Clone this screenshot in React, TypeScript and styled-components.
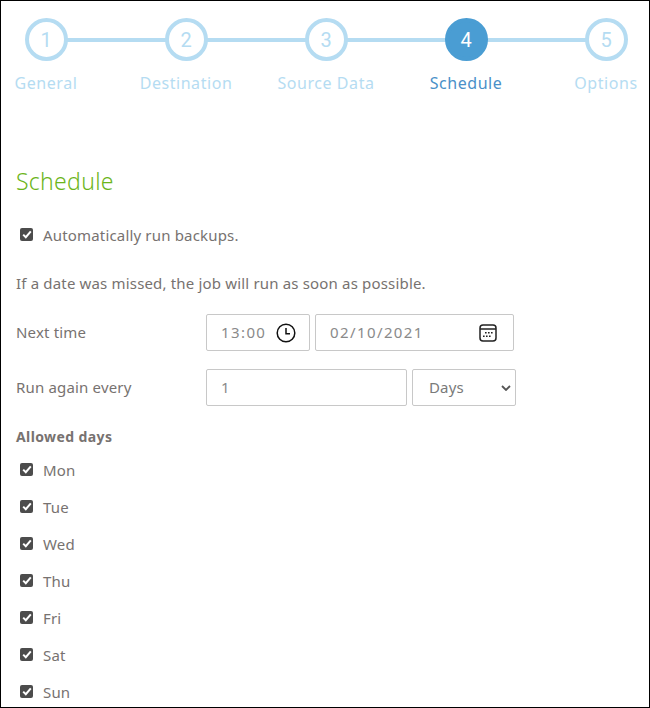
import { createGlobalStyle, styled } from "styled-components";

const steps = ["General", "Destination", "Source Data", "Schedule", "Options"];
const days = ["Mon", "Tue", "Wed", "Thu", "Fri", "Sat", "Sun"];

const GlobalStyle = createGlobalStyle`
  html, body {
    margin: 0;
    padding: 0;
    background: #fff;
  }
  * {
    box-sizing: border-box;
  }
`;

function Check() {
  return (
    <CheckBox>
      <svg width="10" height="9" viewBox="0 0 10 9" fill="none">
        <path d="M1.2 4.6 L3.8 7.2 L8.8 1.4" stroke="#fff" strokeWidth="2" />
      </svg>
    </CheckBox>
  );
}

function ClockIcon() {
  return (
    <svg width="20" height="20" viewBox="0 0 20 20" fill="none" stroke="#111" strokeWidth="1.5">
      <circle cx="10" cy="10" r="8.8" />
      <path d="M10 5 V10.8 H14" />
    </svg>
  );
}

function CalendarIcon() {
  return (
    <svg width="18" height="18" viewBox="0 0 18 18" fill="none">
      <rect x="1" y="1" width="16" height="16" rx="3" stroke="#222" strokeWidth="1.5" />
      <path d="M1 5 H17" stroke="#222" strokeWidth="1.5" />
      <path
        d="M6 8h1.6v1.5H6zM9 8h1.6v1.5H9zM12 8h1.6v1.5H12zM4 11.5h1.6V13H4zM7 11.5h1.6V13H7zM10 11.5h1.6V13H10z"
        fill="#222"
      />
    </svg>
  );
}

export default function App() {
  return (
    <>
      <GlobalStyle />
      <Page>
        <Stepper>
          {steps.map((label, i) => (
            <Step key={label}>
              <Circle $active={i === 3}>{i + 1}</Circle>
              <StepLabel $active={i === 3}>{label}</StepLabel>
            </Step>
          ))}
        </Stepper>

        <Heading>Schedule</Heading>

        <CheckRow>
          <Check />
          Automatically run backups.
        </CheckRow>

        <Note>If a date was missed, the job will run as soon as possible.</Note>

        <FormRow>
          <FieldLabel>Next time</FieldLabel>
          <Field $width={104} $right={13}>
            <span>13:00</span>
            <ClockIcon />
          </Field>
          <Field $width={199} $right={16}>
            <span>02/10/2021</span>
            <CalendarIcon />
          </Field>
        </FormRow>

        <FormRow>
          <FieldLabel>Run again every</FieldLabel>
          <Field $width={201} $right={16}>
            <span>1</span>
          </Field>
          <SelectField>
            <span>Days</span>
            <svg width="10" height="6" viewBox="0 0 10 6" fill="none">
              <path d="M1 1 L5 5 L9 1" stroke="#555" strokeWidth="1.8" />
            </svg>
          </SelectField>
        </FormRow>

        <SubHeading>Allowed days</SubHeading>
        <DayList>
          {days.map((day) => (
            <CheckRow key={day}>
              <Check />
              {day}
            </CheckRow>
          ))}
        </DayList>
      </Page>
    </>
  );
}

const Page = styled.div`
  width: 650px;
  height: 708px;
  overflow: hidden;
  border: 1px solid #000;
  padding: 17px 15px 0;
  font-family: "Noto Sans", sans-serif;
  font-size: 15px;
  letter-spacing: 0.17px;
  color: #777270;
`;

const Stepper = styled.div`
  margin-left: -40px;
  width: 700px;
  display: grid;
  grid-template-columns: repeat(5, 140px);
  position: relative;

  &::before {
    content: "";
    position: absolute;
    left: 70px;
    width: 560px;
    top: 20px;
    height: 4px;
    background: #b5dcf2;
  }
`;

const Step = styled.div`
  display: flex;
  flex-direction: column;
  align-items: center;
  position: relative;
`;

const Circle = styled.div<{ $active: boolean }>`
  width: 43px;
  height: 43px;
  border-radius: 50%;
  border: 4px solid ${(p) => (p.$active ? "#4a9dd3" : "#b5dcf2")};
  background: ${(p) => (p.$active ? "#4a9dd3" : "#fff")};
  color: ${(p) => (p.$active ? "#fff" : "#b5dcf2")};
  display: flex;
  align-items: center;
  justify-content: center;
  font-family: "Roboto", sans-serif;
  font-size: 20px;
  letter-spacing: 0;
  font-weight: 400;
`;

const StepLabel = styled.div<{ $active: boolean }>`
  margin-top: 10px;
  font-size: 16px;
  line-height: 24px;
  letter-spacing: 0.55px;
  color: ${(p) => (p.$active ? "#4a90c8" : "#b5dcf2")};
`;

const Heading = styled.h2`
  margin: 70px 0 0;
  font-size: 23px;
  line-height: 32px;
  font-weight: 300;
  letter-spacing: 0.3px;
  color: #6cb51a;
`;

const CheckRow = styled.div`
  display: flex;
  align-items: center;
  gap: 10px;
  margin-left: 4px;
  height: 24px;
  flex-shrink: 0;
  ${Heading} + & {
    margin-top: 26px;
  }
`;

const CheckBox = styled.span`
  width: 13px;
  height: 13px;
  margin-bottom: 2px;
  border-radius: 2px;
  background: #4c4c4c;
  display: flex;
  align-items: center;
  justify-content: center;
`;

const Note = styled.p`
  margin: 24px 0 0;
  line-height: 24px;
`;

const FormRow = styled.div`
  display: flex;
  align-items: center;
  gap: 5px;
  margin-top: 18px;

  ${Note} + & {
    margin-top: 19px;
  }
`;

const FieldLabel = styled.div`
  width: 185px;
  padding-bottom: 2px;
`;

const Field = styled.div<{ $width: number; $right: number }>`
  width: ${(p) => p.$width}px;
  height: 37px;
  border: 1px solid #c8c8c8;
  border-radius: 2px;
  padding: 0 ${(p) => p.$right}px 0 14px;
  display: flex;
  align-items: center;
  justify-content: space-between;
  letter-spacing: 1.4px;
  color: #8a8a8a;

  span {
    padding-bottom: 2px;
  }
`;

const SelectField = styled.div`
  width: 104px;
  height: 37px;
  border: 1px solid #c8c8c8;
  border-radius: 2px;
  padding: 0 4px 0 16px;
  display: flex;
  align-items: center;
  justify-content: space-between;
  color: #7a7a7a;

  span {
    padding-bottom: 2px;
  }
`;

const SubHeading = styled.div`
  margin-top: 19px;
  font-size: 14px;
  font-weight: 700;
  letter-spacing: 0.4px;
  line-height: 24px;
`;

const DayList = styled.div`
  margin-top: 9px;
  display: flex;
  flex-direction: column;
  gap: 13px;
`;
